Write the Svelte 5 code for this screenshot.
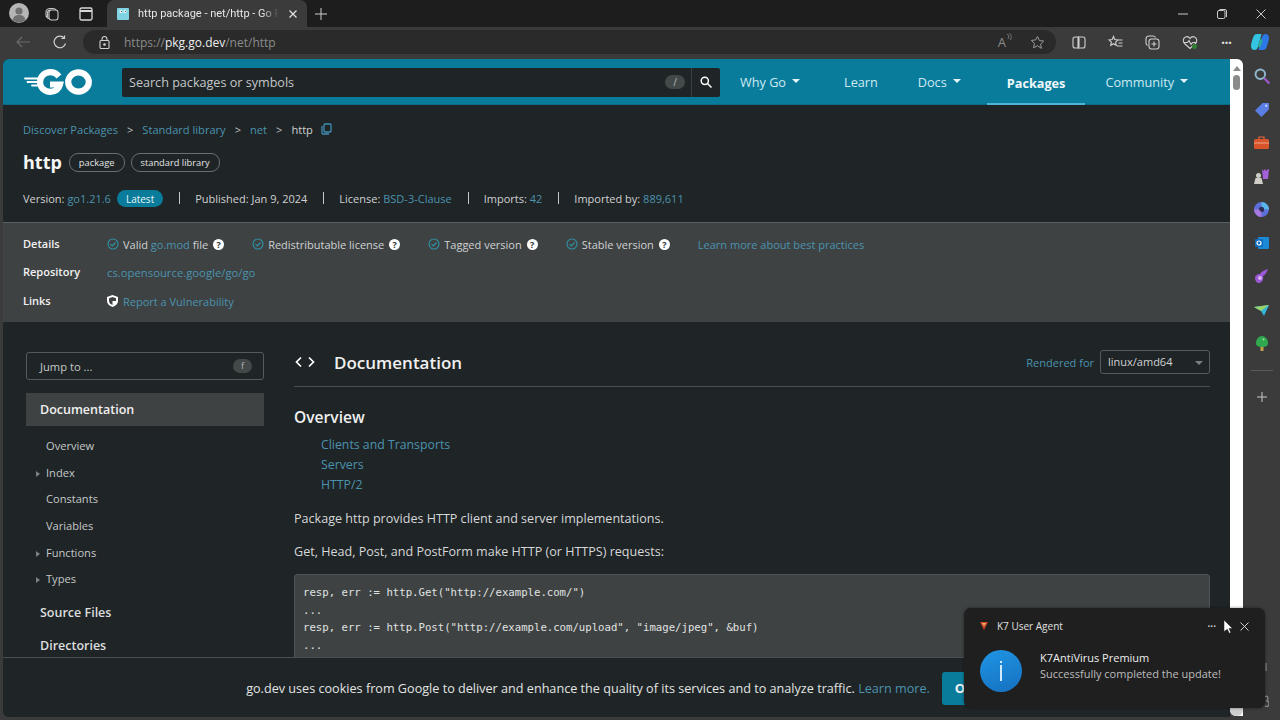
<script lang="ts">
  const nav = [
    { label: 'Why Go', caret: true },
    { label: 'Learn' },
    { label: 'Docs', caret: true },
    { label: 'Packages', active: true },
    { label: 'Community', caret: true }
  ];
  const checks = [
    { pre: 'Valid ', link: 'go.mod', post: ' file' },
    { pre: 'Redistributable license' },
    { pre: 'Tagged version' },
    { pre: 'Stable version' }
  ];
  const outline = [
    { label: 'Overview' },
    { label: 'Index', arrow: true },
    { label: 'Constants' },
    { label: 'Variables' },
    { label: 'Functions', arrow: true },
    { label: 'Types', arrow: true }
  ];
  const code = `resp, err := http.Get("http://example.com/")
...
resp, err := http.Post("http://example.com/upload", "image/jpeg", &buf)
...`;
</script>

<div class="window">
  <div class="tabbar">
    <span class="avatar"><svg width="20" height="20" viewBox="0 0 20 20"><circle cx="10" cy="10" r="10" fill="#b5b5b5"/><circle cx="10" cy="8" r="3.6" fill="#6f6f6f"/><path d="M3.5 17c1-4 3.5-5 6.5-5s5.500 1 6.500 5a10 10 0 0 1-13 0z" fill="#6f6f6f"/></svg></span>
    <svg class="tb-icon first" width="16" height="16" viewBox="0 0 16 16" fill="none" stroke="#c8c8c8" stroke-width="1.100"><rect x="5" y="4" width="9" height="10" rx="2.500"/><path d="M5 12.500c-2-.5-3-2-3-3.500V6c0-2 2-3.500 4-3.500h3c1.500 0 2.500.5 3 1.500"/><path d="M3.600 11V6.500C3.600 5 5 4 6.500 4"/></svg>
    <svg class="tb-icon second" width="14" height="14" viewBox="0 0 14 14" fill="none" stroke="#d8d8d8" stroke-width="1.300"><rect x="1" y="1" width="12" height="12" rx="1.500"/><path d="M1 4h12" stroke-width="2"/></svg>
    <div class="tab">
      <svg width="12" height="12" viewBox="0 0 12 12"><rect width="12" height="12" rx="1" fill="#7fd3e3"/><circle cx="4" cy="3.500" r="1.500" fill="#fff"/><circle cx="8" cy="3.500" r="1.500" fill="#fff"/><circle cx="4.300" cy="3.500" r=".6" fill="#222"/><circle cx="8.300" cy="3.500" r=".6" fill="#222"/></svg>
      <span class="tab-title">http package - net/http - Go Packages</span>
      <svg width="10" height="10" viewBox="0 0 10 10" stroke="#e4e4e4" stroke-width="1.200"><path d="M1.500 1.500l7 7M8.500 1.500l-7 7"/></svg>
    </div>
    <svg class="plus" width="12" height="12" viewBox="0 0 12 12" stroke="#d0d0d0" stroke-width="1"><path d="M6 0v12M0 6h12"/></svg>
    <div class="win-controls">
      <svg width="10" height="10" viewBox="0 0 10 10" stroke="#c8c8c8"><path d="M0 5h10"/></svg>
      <svg width="10" height="10" viewBox="0 0 10 10" fill="none" stroke="#c8c8c8"><rect x=".5" y="1.500" width="7.500" height="8" rx="1.500"/><path d="M2.500 .5h5.500a1.500 1.500 0 0 1 1.500 1.500v6"/></svg>
      <svg width="10" height="10" viewBox="0 0 10 10" stroke="#c8c8c8"><path d="M.5.5l9 9M9.500.5l-9 9"/></svg>
    </div>
  </div>

  <div class="toolbar">
    <svg class="back" width="14" height="12" viewBox="0 0 14 12" fill="none" stroke="#6c6c6c" stroke-width="1.100"><path d="M14 6H1M6 1L1 6l5 5"/></svg>
    <svg class="reload" width="14" height="14" viewBox="0 0 14 14" fill="none" stroke="#cfcfcf" stroke-width="1.200"><path d="M12.500 8.500A5.800 5.800 0 1 1 11 2.800"/><path d="M11.500 .5v3h-3"/></svg>
    <div class="address">
      <svg width="11" height="13" viewBox="0 0 11 13" fill="none" stroke="#d0d0d0" stroke-width="1.100"><rect x="1" y="4.500" width="9" height="8" rx="1"/><path d="M3 4.500V3a2.500 2.500 0 0 1 5 0v1.500"/><circle cx="5.500" cy="8.500" r=".8" fill="#d0d0d0"/></svg>
      <span class="url"><span>https://</span><b>pkg.go.dev</b><span>/net/http</span></span>
      <span class="addr-right">
        <span class="read">A<svg width="6" height="8" viewBox="0 0 6 8" fill="none" stroke="#8a8a8a" stroke-width=".8"><path d="M1 1c2 1 2 3 1 5M3 0c2.500 2 2.500 4 1.500 7"/></svg></span>
        <svg width="15" height="15" viewBox="0 0 24 24" fill="none" stroke="#9a9a9a" stroke-width="1.600"><path d="M12 2.500l3 6.300 6.900.9-5 4.800 1.300 6.900L12 17.200l-6.200 3.200 1.300-6.900-5-4.800 6.900-.9z"/></svg>
      </span>
    </div>
    <div class="tools">
      <svg width="14" height="13" viewBox="0 0 14 13" fill="none" stroke="#cfcfcf" stroke-width="1.100"><path d="M6 1H3a2 2 0 0 0-2 2v7a2 2 0 0 0 2 2h3zM8 1h3a2 2 0 0 1 2 2v7a2 2 0 0 1-2 2H8M7 0v13"/></svg>
      <svg width="15" height="15" viewBox="0 0 15 15" fill="none" stroke="#cfcfcf" stroke-width="1.100"><path d="M5.500 1.500l1.300 3 3.200.4-2.400 2.200.7 3.200-2.800-1.600-2.800 1.600.7-3.200L1 4.900l3.200-.4zM10 5h4.500M10.500 8H14.500M9 11h5.500"/></svg>
      <svg width="15" height="15" viewBox="0 0 15 15" fill="none" stroke="#cfcfcf" stroke-width="1.100"><rect x="4" y="4" width="10" height="10" rx="2.500"/><path d="M2.500 10.500C1.500 10 1 9 1 8V4a3 3 0 0 1 3-3h4c1 0 2 .5 2.500 1.500M9 6.500v5M6.500 9h5"/></svg>
      <svg width="16" height="15" viewBox="0 0 16 15" fill="none" stroke="#cfcfcf" stroke-width="1.100"><path d="M8 13.500L2.500 8.500C.5 6.500 1 3 3.500 2 5.500 1.200 7 2 8 3.500 9 2 10.500 1.200 12.500 2c2.500 1 3 4.500 1 6.500z"/><path d="M2 7.500h3.500l1.500-2 2 4 1.500-2H14"/><circle cx="12.500" cy="11.500" r="2.500" fill="#2e7d32" stroke="none"/></svg>
      <span class="dots">···</span>
    </div>
    <svg class="copilot" width="20" height="18" viewBox="0 0 20 18"><path d="M7 1h4.500L8 14c-.5 2-2 3-3.500 3C2 17 1 15 1 13c0-2 1.500-7 2.500-9.500C4.200 1.800 5.500 1 7 1z" fill="#33c4e4"/><path d="M13 17H8.500L12 4c.5-2 2-3 3.500-3C18 1 19 3 19 5c0 2-1.500 7-2.500 9.500-.7 1.700-2 2.500-3.500 2.500z" fill="#2b78e6"/><path d="M8.200 13.500L11 4.200c.3 2 1 3 1.500 4L10 15z" fill="#2fae9c"/></svg>
  </div>

  <div class="body">
    <div class="page">
      <header class="site-header">
        <svg class="go-logo" width="68" height="26" viewBox="0 0 68 26" aria-label="Go">
          <g stroke="#fff" stroke-linecap="round" stroke-width="1.800"><path d="M1 9.500h13M3.500 13h10M8 16.500h5"/></g>
          <g fill="none" stroke="#fff" stroke-width="6.200"><path d="M35 7.500C32.500 4.500 29.500 3.200 26.500 3.200 20.500 3.200 16 7.500 16 13c0 5.500 4.500 9.800 10.500 9.800 5 0 8.500-3 9.500-7.300H26"/><ellipse cx="54.500" cy="13" rx="10.300" ry="9.700"/></g>
        </svg>
        <div class="search">
          <span class="placeholder">Search packages or symbols</span>
          <span class="slash">/</span>
          <span class="search-btn"><svg width="12" height="12" viewBox="0 0 12 12" fill="none" stroke="#fff" stroke-width="1.500"><circle cx="4.800" cy="4.800" r="3.600"/><path d="M7.500 7.500l4 4"/></svg></span>
        </div>
        <nav>
          {#each nav as item}
            <span class="nav-item" class:active={item.active}>{item.label}{#if item.caret}<i class="caret"></i>{/if}</span>
          {/each}
        </nav>
      </header>

      <section class="summary">
        <div class="crumbs">
          <a href="#a">Discover Packages</a><span class="sep">&gt;</span><a href="#a">Standard library</a><span class="sep">&gt;</span><a href="#a">net</a><span class="sep">&gt;</span><span>http</span>
          <svg width="11" height="12" viewBox="0 0 11 12" fill="none" stroke="#3f8fb5" stroke-width="1.300"><rect x="3" y="1" width="7" height="8" rx="1"/><path d="M1 3v7a1 1 0 0 0 1 1h6"/></svg>
        </div>
        <div class="title-row">
          <h1>http</h1>
          <span class="chip">package</span>
          <span class="chip">standard library</span>
        </div>
        <div class="meta">
          <span>Version: <a href="#a">go1.21.6</a></span><span class="latest">Latest</span>
          <i class="bar"></i><span>Published: Jan 9, 2024</span>
          <i class="bar"></i><span>License: <a href="#a">BSD-3-Clause</a></span>
          <i class="bar"></i><span>Imports: <a href="#a">42</a></span>
          <i class="bar"></i><span>Imported by: <a href="#a">889,611</a></span>
        </div>
      </section>

      <section class="details">
        <b>Details</b>
        <div class="checks">
          {#each checks as c}
            <span class="check">
              <svg width="12" height="12" viewBox="0 0 12 12" fill="none" stroke="#2f93a8" stroke-width="1.100"><circle cx="6" cy="6" r="5"/><path d="M3.500 6.200l1.800 1.700 3.200-3.400"/></svg>
              <span>{c.pre}{#if c.link}<a href="#a">{c.link}</a>{/if}{c.post ?? ''}</span>
              <span class="help">?</span>
            </span>
          {/each}
          <a href="#a">Learn more about best practices</a>
        </div>
        <b>Repository</b>
        <div class="repo"><a href="#a">cs.opensource.google/go/go</a></div>
        <b>Links</b>
        <div class="vuln">
          <svg width="11" height="12" viewBox="0 0 11 12"><path d="M5.500 0L11 2v4c0 3-2.500 5-5.500 6C2.500 11 0 9 0 6V2z" fill="#fff"/><path d="M5.500 2v8C3.500 9.200 2 8 2 6V3.300zM5.500 6H9c0-1 0-2 0-2.700L5.500 2z" fill="#3e4243"/></svg>
          <a href="#a">Report a Vulnerability</a>
        </div>
      </section>

      <div class="columns">
        <aside>
          <div class="jump"><span>Jump to ...</span><span class="f">f</span></div>
          <div class="side-head current">Documentation</div>
          <ul>
            {#each outline as o}
              <li class:arrow={o.arrow}>{o.label}</li>
            {/each}
          </ul>
          <div class="side-head">Source Files</div>
          <div class="side-head">Directories</div>
        </aside>
        <main>
          <div class="doc-head">
            <svg width="20" height="12" viewBox="0 0 20 12" fill="none" stroke="#fff" stroke-width="1.700"><path d="M6 1.500L1.500 6 6 10.500M14 1.500L18.500 6 14 10.500"/></svg>
            <h2>Documentation</h2>
            <span class="rendered">Rendered for</span>
            <span class="select">linux/amd64<i></i></span>
          </div>
          <h3>Overview</h3>
          <div class="toc">
            <a href="#a">Clients and Transports</a>
            <a href="#a">Servers</a>
            <a href="#a">HTTP/2</a>
          </div>
          <p>Package http provides HTTP client and server implementations.</p>
          <p>Get, Head, Post, and PostForm make HTTP (or HTTPS) requests:</p>
          <pre>{code}</pre>
        </main>
      </div>

      <div class="cookie">
        <span>go.dev uses cookies from Google to deliver and enhance the quality of its services and to analyze traffic. <a href="#a">Learn more.</a></span>
        <button>OK</button>
      </div>
    </div>

    <div class="scrollbar"><i class="up"></i><i class="thumb"></i><i class="down"></i></div>

    <div class="side-rail">
      <svg width="16" height="16" viewBox="0 0 14 14" fill="none"><circle cx="5.500" cy="5.500" r="4.200" stroke="#8fb6cf" stroke-width="1.700"/><path d="M9 9l4.500 4.500" stroke="#a257c9" stroke-width="2"/></svg>
      <svg width="16" height="15" viewBox="0 0 15 14"><path d="M1 8l7-7h6v6l-7 7z" fill="#5b7ee5"/><circle cx="11.500" cy="3.500" r="1.100" fill="#bcd0ff"/></svg>
      <svg width="15" height="13" viewBox="0 0 15 13"><path d="M5 3V1h5v2" fill="none" stroke="#e8663a" stroke-width="1.200"/><rect y="3" width="15" height="10" rx="1.500" fill="#d9542b"/><rect x="0" y="6.500" width="15" height="1" fill="#f0a58a"/></svg>
      <svg width="15" height="16" viewBox="0 0 15 16"><path d="M8 1l1.500 2L11 1l1.200 2L14 1l1 0-1 10H9z" fill="#a560d8"/><circle cx="4.500" cy="7.500" r="2.500" fill="#cfcfc8"/><path d="M0 16l1.500-6h6L9 16z" fill="#cfcfc8"/></svg>
      <svg width="15" height="15" viewBox="0 0 14 14"><circle cx="7" cy="7" r="7" fill="#5d6fd8"/><path d="M7 0a7 7 0 0 1 7 7H9a2 2 0 0 0-2-2z" fill="#58b6e8"/><circle cx="7" cy="7" r="2.500" fill="#2f2f55"/><path d="M0 7a7 7 0 0 0 7 7V9a2 2 0 0 1-2-2z" fill="#a878e0"/></svg>
      <svg width="14" height="14" viewBox="0 0 14 14"><rect x="3" y="1" width="11" height="12" rx="1" fill="#1b8ad6"/><rect y="3" width="8" height="8" rx="1" fill="#0f6cbd"/><circle cx="4" cy="7" r="2" fill="none" stroke="#fff" stroke-width="1.200"/></svg>
      <svg width="15" height="15" viewBox="0 0 15 15"><path d="M1 9c0-3 3-4 5-4 1-2 4-4 8-5-1 3-3 6-5 7 1 3-1 7-4 7-2 0-4-2-4-5z" fill="#9b59d8"/><circle cx="6" cy="9" r="2" fill="#d9b3f0"/></svg>
      <svg width="15" height="11" viewBox="0 0 15 11"><path d="M0 2l15-2-5 11-3-5z" fill="#33b5d8"/><path d="M0 2l7 4 8-6z" fill="#9ad36a"/></svg>
      <svg width="12" height="15" viewBox="0 0 12 15"><path d="M6 0c3 0 6 3 6 7 0 3-2 4-6 4S0 10 0 7c0-4 3-7 6-7z" fill="#2fa84f"/><rect x="4.500" y="11" width="3" height="4" fill="#c7a14a"/><circle cx="7.500" cy="3.500" r="1" fill="#a7e0a0"/></svg>
      <i class="rail-line"></i>
      <svg width="10" height="10" viewBox="0 0 10 10" stroke="#c8c8c8"><path d="M5 0v10M0 5h10"/></svg>
    </div>
  </div>

  <svg class="rail-bits" width="4" height="48" viewBox="0 0 4 48" fill="none" stroke="#8c8c8c" stroke-width="1.200"><path d="M1 2v8"/><path d="M0 36c2-2 3 0 3 2s-2 2-2 2c2 0 3 1 3 3s-2 3-4 2"/></svg>

  <div class="toast">
    <div class="toast-top">
      <svg width="8" height="8" viewBox="0 0 8 8"><path d="M0 0h8L4 8z" fill="#c8472a"/><path d="M2 1h4L4 4z" fill="#f0b070"/></svg>
      <span class="toast-app">K7 User Agent</span>
      <span class="toast-dots">···</span>
      <svg width="9" height="9" viewBox="0 0 9 9" stroke="#d0d0d0"><path d="M.5.5l8 8M8.500.5l-8 8"/></svg>
    </div>
    <div class="toast-main">
      <span class="info"><i></i><i></i></span>
      <div>
        <div class="toast-title">K7AntiVirus Premium</div>
        <div class="toast-msg">Successfully completed the update!</div>
      </div>
    </div>
  </div>

  <svg class="cursor" width="9" height="14" viewBox="0 0 9 14"><path d="M0 0l8.500 8.500H5l1.800 4-1.600.8-1.800-4L0 11.500z" fill="#fff" stroke="#222" stroke-width=".5"/></svg>
</div>

<style>
  :global(body) {
    margin: 0;
    background: #3b3b3b;
  }

  .window {
    position: relative;
    width: 1280px;
    height: 720px;
    overflow: hidden;
    display: flex;
    flex-direction: column;
    font-family: "Open Sans", "Noto Sans", sans-serif;
    font-size: 11px;
    color: #cfd1d2;
    background: #3b3b3b;
  }

  a {
    color: #4b93ae;
    text-decoration: none;
  }

  /* browser chrome */
  .tabbar {
    height: 27px;
    flex: none;
    display: flex;
    align-items: center;
    background: #1d1d1d;
    padding-left: 9px;
    padding-bottom: 0;
  }
  .avatar { display: flex; margin-top: -1px; }
  .tb-icon.first { margin-left: 15px; }
  .tb-icon.second { margin-left: 19px; }
  .tab {
    width: 200px;
    height: 27px;
    margin-left: 14px;
    box-sizing: border-box;
    padding: 0 9px 0 10px;
    display: flex;
    align-items: center;
    gap: 9px;
    background: #3b3b3b;
    border-radius: 7px 7px 0 0;
    font-family: Roboto, "Open Sans", sans-serif;
    font-size: 11px;
    color: #e6e6e6;
  }
  .tab-title {
    flex: 1;
    white-space: nowrap;
    overflow: hidden;
    -webkit-mask-image: linear-gradient(90deg, #000 88%, transparent);
    mask-image: linear-gradient(90deg, #000 88%, transparent);
  }
  .plus { margin-left: 8px; }
  .win-controls {
    margin-left: auto;
    display: flex;
    gap: 29px;
    padding-right: 14px;
  }

  .toolbar {
    height: 32px;
    flex: none;
    display: flex;
    align-items: center;
    background: #3b3b3b;
    padding: 0 0 2px 16px;
    box-sizing: border-box;
  }
  .reload { margin-left: 23px; }
  .address {
    width: 973px;
    height: 24px;
    margin-left: 16px;
    box-sizing: border-box;
    padding: 0 11px 0 16px;
    display: flex;
    align-items: center;
    gap: 14px;
    background: #2a2a2a;
    border-radius: 12px;
  }
  .url { color: #8a8a8a; font-size: 12px; }
  .url b { color: #ececec; font-weight: 400; }
  .addr-right {
    margin-left: auto;
    display: flex;
    align-items: center;
    gap: 18px;
  }
  .read { color: #8a8a8a; font-size: 13px; display: flex; align-items: flex-start; }
  .tools {
    margin-left: 16px;
    display: flex;
    align-items: center;
    gap: 22px;
  }
  .dots { color: #dcdcdc; font-size: 14px; font-weight: 700; letter-spacing: -.5px; margin-left: 1px; }
  .copilot { margin-left: 19px; }

  .body {
    flex: 1;
    min-height: 0;
    display: flex;
    padding-left: 3px;
  }
  .page {
    position: relative;
    flex: 1;
    min-width: 0;
    margin-bottom: 3px;
    overflow: hidden;
    background: #1f2426;
    border-radius: 6px 0 0 6px;
  }
  .scrollbar {
    width: 13px;
    flex: none;
    margin-bottom: 4px;
    background: #fff;
    display: flex;
    flex-direction: column;
    align-items: center;
    padding-top: 7px;
    box-sizing: border-box;
    border-radius: 0 6px 0 6px;
  }
  .up {
    width: 0;
    height: 0;
    border: 4px solid transparent;
    border-top: 0;
    border-bottom: 5px solid #8b8b8b;
  }
  .thumb {
    width: 7px;
    height: 15px;
    margin-top: 4px;
    border-radius: 4px;
    background: #8b8b8b;
  }
  .down {
    width: 100%;
    height: 9px;
    margin-top: auto;
    background: #cfcfcf;
    border-radius: 0 0 6px 6px;
  }
  .side-rail {
    width: 37px;
    flex: none;
    display: grid;
    grid-template-rows: repeat(9, 33.500px) 22px 28px;
    place-items: center;
    align-content: start;
  }
  .rail-line {
    width: 22px;
    height: 1px;
    margin-bottom: 3px;
    background: #5a5a5a;
  }
  .rail-bits {
    position: absolute;
    left: 1265px;
    top: 661px;
  }

  /* go.dev header */
  .site-header {
    height: 46px;
    box-sizing: border-box;
    display: flex;
    align-items: center;
    background: #0a7c9b;
    border-bottom: 1px solid #0b6b85;
    padding: 1px 0 0 21px;
  }
  .go-logo { flex: none; }
  .search {
    width: 598px;
    height: 29px;
    margin-left: 30px;
    box-sizing: border-box;
    display: flex;
    align-items: center;
    background: #1f2426;
    border-radius: 2px;
    padding-left: 7px;
  }
  .placeholder {
    flex: 1;
    font-size: 12.600px;
    color: #c4c7c8;
  }
  .slash {
    width: 20px;
    height: 14px;
    margin-right: 6px;
    border-radius: 7px;
    background: #434849;
    font-size: 10px;
    line-height: 14px;
    text-align: center;
    color: #b5b8b9;
  }
  .search-btn {
    width: 29px;
    height: 29px;
    display: flex;
    align-items: center;
    justify-content: center;
    border-left: 1px solid #3a3f41;
    box-sizing: border-box;
  }
  nav {
    display: flex;
    align-self: stretch;
  }
  .nav-item {
    display: flex;
    align-items: center;
    gap: 5px;
    padding: 0 20px;
    font-size: 12.700px;
    color: #cdeaf2;
    white-space: nowrap;
  }
  .nav-item.active {
    font-weight: 700;
    color: #eef8fb;
    box-shadow: inset 0 -2px 0 #50b4d4;
    margin: 0 0 -1px 2px;
  }
  .caret {
    width: 0;
    height: 0;
    margin: 0 4px 2px 1px;
    border: 4px solid transparent;
    border-bottom: 0;
    border-top: 4px solid #e8f4f8;
  }

  /* package summary */
  .summary {
    height: 118px;
    box-sizing: border-box;
    padding: 14px 0 0 20px;
    border-bottom: 1px solid #5a5f60;
  }
  .crumbs {
    display: flex;
    align-items: center;
    height: 20px;
    font-size: 11.100px;
  }
  .sep { margin: 0 9px; color: #bfc2c3; }
  .crumbs svg { margin-left: 8px; }
  .title-row {
    display: flex;
    align-items: center;
    gap: 6px;
    margin-top: 9px;
    height: 28px;
  }
  h1 {
    margin: 0 1px 0 0;
    font-size: 18px;
    font-weight: 700;
    color: #f5f5f5;
  }
  .chip {
    height: 17px;
    padding: 0 9px;
    border: 1px solid #6a6f70;
    border-radius: 9px;
    font-size: 9.300px;
    line-height: 17px;
    color: #e4e5e5;
  }
  .meta {
    display: flex;
    align-items: center;
    margin-top: 12px;
    height: 20px;
  }
  .latest {
    height: 17px;
    margin-left: 6px;
    padding: 0 9px;
    border-radius: 9px;
    background: #0a7c9b;
    color: #e8f4f8;
    font-size: 10px;
    line-height: 18px;
  }
  .bar {
    width: 1px;
    height: 12px;
    margin: 0 15px 0 16px;
    background: #c5c8c9;
  }

  .details {
    height: 99px;
    box-sizing: border-box;
    padding: 7px 20px 0;
    display: grid;
    grid-template-columns: 84px 1fr;
    grid-auto-rows: 28.500px;
    align-items: center;
    background: #3e4243;
  }
  .details b { font-weight: 600; color: #f2f2f2; margin-top: -2px; }
  .repo { font-size: 11.300px; }
  .checks {
    display: flex;
    align-items: center;
    gap: 28px;
  }
  .check {
    display: flex;
    align-items: center;
    gap: 4px;
  }
  .help {
    width: 11px;
    height: 11px;
    margin-left: 1px;
    border-radius: 50%;
    background: #fff;
    color: #2f3334;
    font-size: 9px;
    font-weight: 700;
    line-height: 11px;
    text-align: center;
  }
  .vuln {
    display: flex;
    align-items: center;
    gap: 5px;
  }

  /* documentation */
  .columns {
    display: flex;
    padding: 30px 20px 0 23px;
    gap: 30px;
  }
  aside {
    width: 238px;
    flex: none;
  }
  .jump {
    height: 28px;
    box-sizing: border-box;
    display: flex;
    align-items: center;
    justify-content: space-between;
    padding: 0 11px 0 13px;
    border: 1px solid #555a5b;
    border-radius: 3px;
    font-size: 11.200px;
    color: #c5c8c9;
  }
  .f {
    width: 19px;
    height: 14px;
    border-radius: 7px;
    background: #434849;
    font-size: 9px;
    line-height: 14px;
    text-align: center;
    color: #b5b8b9;
  }
  .side-head {
    display: flex;
    align-items: center;
    height: 33px;
    padding-left: 14px;
    font-size: 12.500px;
    font-weight: 600;
    color: #dcdedf;
  }
  .side-head.current {
    margin-top: 13px;
    background: #3e4243;
    color: #f0f0f0;
  }
  ul {
    list-style: none;
    margin: 7px 0 3px;
    padding: 0 0 0 20px;
  }
  li {
    position: relative;
    height: 26.700px;
    line-height: 26.700px;
    font-size: 11.100px;
    color: #c5c8c9;
  }
  li.arrow::before {
    content: "";
    position: absolute;
    left: -10px;
    top: 11px;
    border: 3px solid transparent;
    border-right: 0;
    border-left: 4px solid #7c8081;
  }
  main {
    flex: 1;
    min-width: 0;
  }
  .doc-head {
    height: 37px;
    display: flex;
    align-items: center;
    padding: 0 0 12px 1px;
    box-sizing: border-box;
    border-bottom: 1px solid #4a4f50;
    margin-top: -2px;
  }
  h2 {
    margin: 0 0 0 19px;
    flex: 1;
    font-size: 17px;
    font-weight: 600;
    color: #f0f0f0;
  }
  .rendered { color: #4b93ae; }
  .select {
    position: relative;
    width: 110px;
    height: 24px;
    box-sizing: border-box;
    margin-left: 6px;
    padding-left: 7px;
    border: 1px solid #555a5b;
    border-radius: 3px;
    line-height: 22px;
    color: #d0d2d3;
  }
  .select i {
    position: absolute;
    right: 6px;
    top: 10px;
    border: 4px solid transparent;
    border-bottom: 0;
    border-top: 4px solid #7c8081;
  }
  h3 {
    margin: 19px 0 0;
    font-size: 15.600px;
    font-weight: 600;
    color: #f0f0f0;
    line-height: 22px;
  }
  .toc {
    display: flex;
    flex-direction: column;
    align-items: flex-start;
    margin: 7px 0 0 27px;
    font-size: 12.300px;
    line-height: 20px;
  }
  p {
    margin: 14px 0 0;
    font-size: 12.570px;
    line-height: 19px;
    color: #d6d8d9;
  }
  pre {
    margin: 13px 0 0;
    padding: 9px 8px;
    min-height: 120px;
    border: 1px solid #4e5354;
    border-radius: 3px;
    background: #3e4243;
    font-family: "DejaVu Sans Mono", monospace;
    font-size: 10.670px;
    line-height: 17.500px;
    color: #e0e2e2;
  }

  .cookie {
    position: absolute;
    left: 0;
    right: 0;
    bottom: 0;
    height: 60px;
    box-sizing: border-box;
    display: flex;
    align-items: center;
    justify-content: center;
    gap: 12px;
    background: #1f2426;
    border-top: 1px solid #4a4f50;
    font-size: 12.630px;
    color: #e2e4e4;
    padding-top: 1px;
  }
  .cookie button {
    width: 45px;
    height: 33px;
    border: 0;
    border-radius: 3px;
    background: #0a7c9b;
    color: #f2f2f2;
    font: 700 13px "Open Sans", sans-serif;
  }

  /* notification */
  .toast {
    position: absolute;
    left: 964px;
    top: 608px;
    width: 301px;
    height: 100px;
    box-sizing: border-box;
    padding: 0 16px;
    background: #1f1f1f;
    border-radius: 7px;
    box-shadow: 0 0 3px rgba(0, 0, 0, .5);
  }
  .toast-top {
    height: 36px;
    display: flex;
    align-items: center;
    font-size: 10px;
    color: #e0e0e0;
  }
  .toast-app { margin-left: 9px; flex: 1; }
  .toast-dots { margin-right: 24px; color: #c5c5c5; font-weight: 700; }
  .toast-main {
    display: flex;
    align-items: flex-start;
    gap: 18px;
    font-size: 11px;
    padding-top: 6px;
  }
  .toast-title { color: #eee; line-height: 16px; }
  .toast-msg { color: #bdbdbd; line-height: 16px; }
  .info {
    width: 42px;
    height: 42px;
    flex: none;
    border-radius: 50%;
    background: linear-gradient(160deg, #1f95e4, #1670c0);
    display: flex;
    flex-direction: column;
    align-items: center;
    justify-content: center;
    gap: 2px;
  }
  .info i { width: 2px; background: #cfeafc; }
  .info i:first-child { height: 2px; }
  .info i:last-child { height: 16px; }
  .cursor {
    position: absolute;
    left: 1224px;
    top: 620px;
  }
</style>
